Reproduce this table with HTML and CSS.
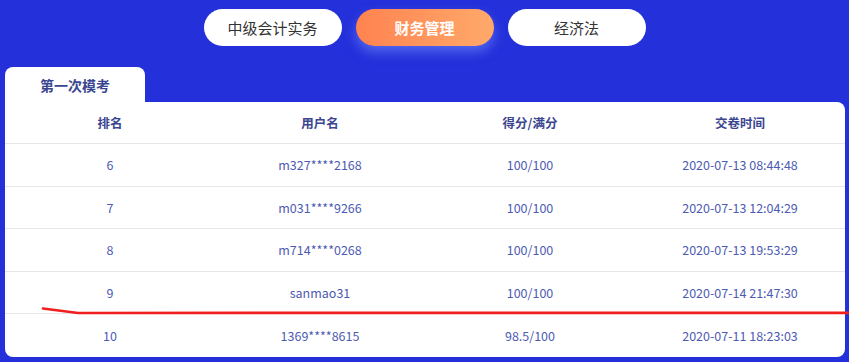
FILE: index.html
```html
<!DOCTYPE html>
<html>
<head>
<meta charset="utf-8">
<link rel="stylesheet" href="styles.css">
</head>
<body>
<div class="page">
  <div class="subjects">
    <div class="pill">中级会计实务</div>
    <div class="pill active">财务管理</div>
    <div class="pill">经济法</div>
  </div>
  <div class="tabs">
    <div class="tab">第一次模考</div>
  </div>
  <div class="card">
    <div class="row head">
      <div>排名</div><div>用户名</div><div>得分/满分</div><div>交卷时间</div>
    </div>
    <div class="row">
      <div>6</div><div>m327****2168</div><div>100/100</div><div>2020-07-13 08:44:48</div>
    </div>
    <div class="row">
      <div>7</div><div>m031****9266</div><div>100/100</div><div>2020-07-13 12:04:29</div>
    </div>
    <div class="row">
      <div>8</div><div>m714****0268</div><div>100/100</div><div>2020-07-13 19:53:29</div>
    </div>
    <div class="row">
      <div>9</div><div>sanmao31</div><div>100/100</div><div>2020-07-14 21:47:30</div>
    </div>
    <div class="row last">
      <div>10</div><div>1369****8615</div><div>98.5/100</div><div>2020-07-11 18:23:03</div>
    </div>
  </div>
  <svg class="mark" width="849" height="362" viewBox="0 0 849 362">
    <path d="M43 308.5 L78 313 L849 312.8" fill="none" stroke="#f01e1e" stroke-width="2.7" stroke-linecap="round" stroke-linejoin="round"/>
  </svg>
</div>
</body>
</html>
```
FILE: styles.css
```css
html, body {
  margin: 0;
  padding: 0;
}
body {
  width: 849px;
  height: 362px;
  background: #2430da;
  font-family: "Microsoft YaHei", "Noto Sans CJK SC", "Noto Sans", sans-serif;
  overflow: hidden;
}
.page {
  position: relative;
  width: 849px;
  height: 362px;
}
.subjects {
  display: flex;
  justify-content: center;
  gap: 14px;
  padding-top: 9px;
  height: 37px;
}
.pill {
  width: 138px;
  height: 37px;
  border-radius: 19px;
  background: #fff;
  color: #333;
  font-size: 15px;
  display: flex;
  align-items: center;
  justify-content: center;
}
.pill.active {
  background: linear-gradient(90deg, #ff8350, #ffa96a);
  color: #fff;
  font-weight: bold;
  box-shadow: 0 6px 12px rgba(120, 150, 255, 0.55);
}
.tabs {
  display: flex;
  padding: 21px 0 0 5px;
}
.tab {
  width: 140px;
  height: 35px;
  background: #fff;
  border-radius: 8px 8px 0 0;
  color: #3b4690;
  font-size: 14px;
  font-weight: bold;
  display: flex;
  align-items: center;
  justify-content: center;
}
.card {
  margin: 0 4px 0 5px;
  background: #fff;
  border-radius: 0 8px 8px 8px;
  height: 255px;
  overflow: hidden;
}
.row {
  display: grid;
  grid-template-columns: repeat(4, 1fr);
  height: 42.5px;
  border-bottom: 1px solid #e6e6e6;
  box-sizing: border-box;
  align-items: center;
  text-align: center;
  font-size: 12.5px;
  color: #4d5bb3;
}
.row.head {
  height: 42px;
  font-weight: bold;
  color: #3b4690;
}
.row.last {
  border-bottom: none;
}
.mark {
  position: absolute;
  left: 0;
  top: 0;
  pointer-events: none;
}
```
